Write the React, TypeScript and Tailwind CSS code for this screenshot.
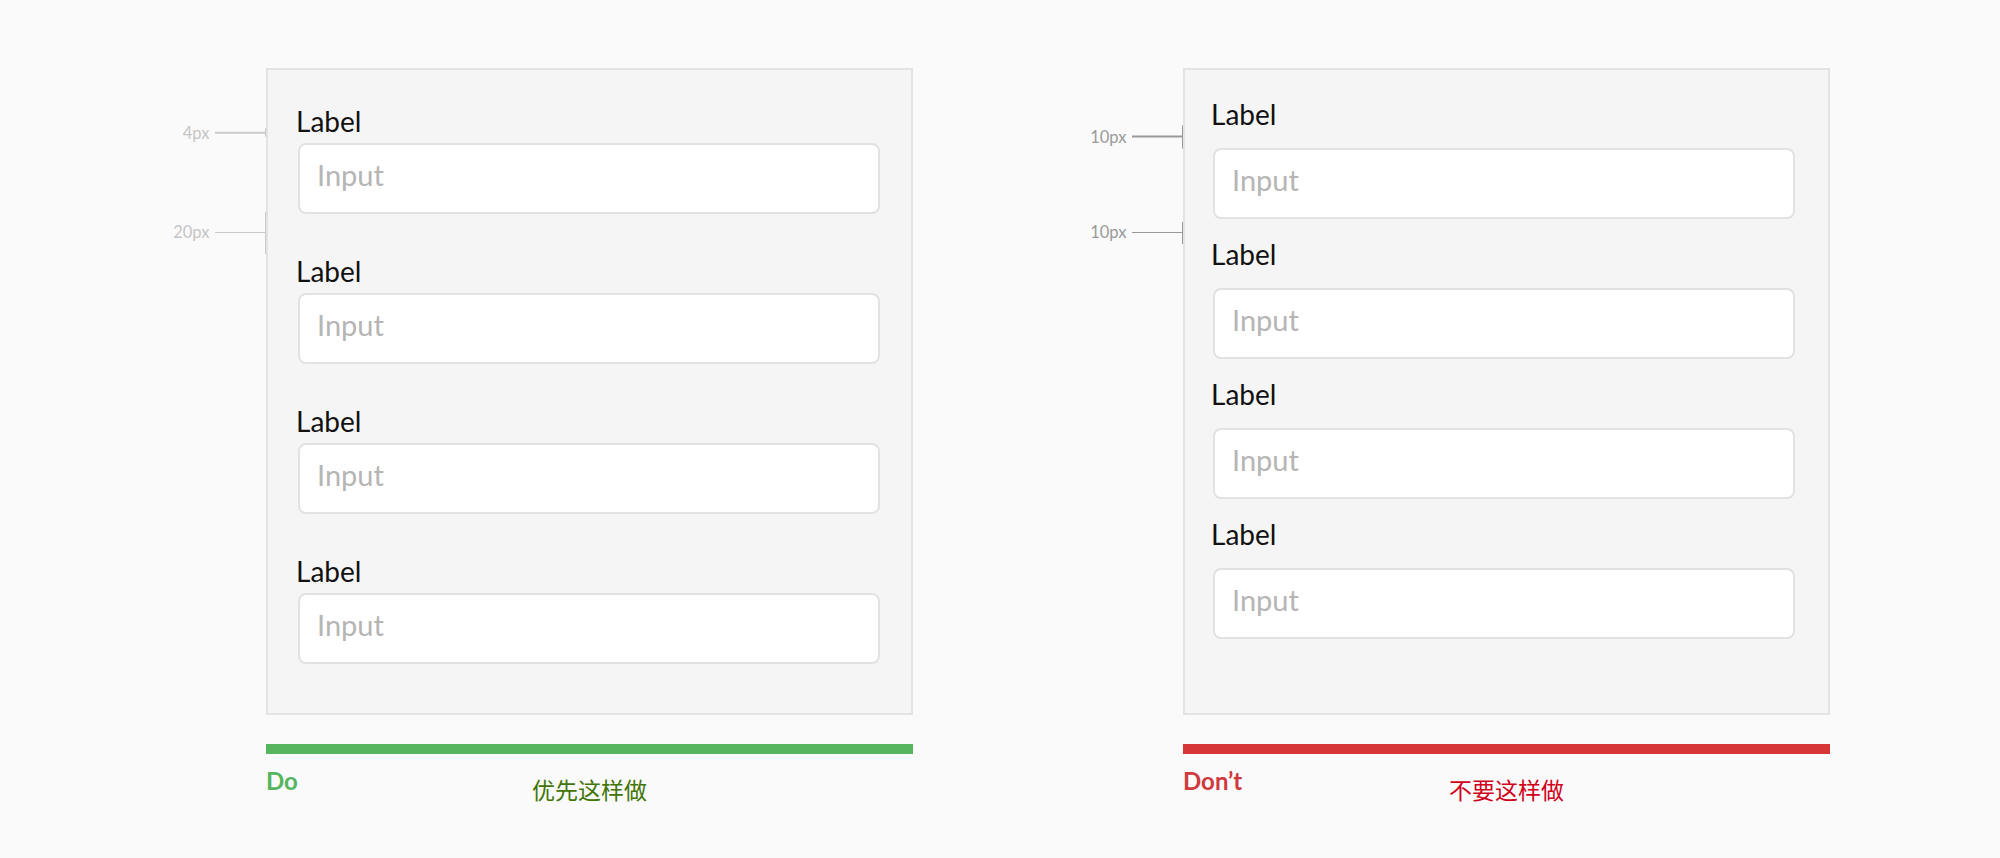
import React from "react";

const font = { fontFamily: "Lato, 'Noto Sans CJK SC', sans-serif" };

type Mark = { text: string; pos: string; tick: string };

const Measure = ({ mark, text, line }: { mark: Mark; text: string; line: string }) => (
  <div className={`absolute right-[calc(100%+2px)] flex -translate-y-1/2 items-center ${mark.pos}`}>
    <span className={`text-[16.5px] leading-none ${text}`}>{mark.text}</span>
    <span className={`ml-[5px] h-[1.5px] w-[50px] ${line}`} />
    <span className={`w-[1.5px] ${mark.tick} ${line}`} />
  </div>
);

const Field = ({ labelGap, inputIndent }: { labelGap: string; inputIndent: string }) => (
  <div className="flex flex-col">
    <span className="text-[28px] leading-[34px] text-[#111]">Label</span>
    <div
      className={`h-[71px] w-[582px] rounded-[8px] border-2 border-[#e2e2e2] bg-white pl-[17px] pt-[12px] text-[29px] leading-[35px] text-[#b5b5b5] ${labelGap} ${inputIndent}`}
    >
      Input
    </div>
  </div>
);

type Example = {
  marks: Mark[];
  markText: string;
  markLine: string;
  pad: string;
  gap: string;
  labelGap: string;
  inputIndent: string;
  bar: string;
  title: string;
  titleColor: string;
  note: string;
  noteColor: string;
};

const Panel = ({ ex }: { ex: Example }) => (
  <div className="flex w-[647px] flex-col">
    <div className={`relative flex h-[647px] flex-col border-2 border-[#e3e3e3] bg-[#f5f5f5] ${ex.pad} ${ex.gap}`}>
      {ex.marks.map((m, i) => (
        <Measure key={i} mark={m} text={ex.markText} line={ex.markLine} />
      ))}
      {[0, 1, 2, 3].map((i) => (
        <Field key={i} labelGap={ex.labelGap} inputIndent={ex.inputIndent} />
      ))}
    </div>
    <div className={`mt-[29px] h-[10px] ${ex.bar}`} />
    <div className="mt-[12px] grid">
      <span className={`col-start-1 row-start-1 justify-self-start text-[24px] font-bold leading-[29px] ${ex.titleColor}`}>
        {ex.title}
      </span>
      <span className={`col-start-1 row-start-1 mt-[10px] justify-self-center text-[23px] leading-[29px] ${ex.noteColor}`}>
        {ex.note}
      </span>
    </div>
  </div>
);

const examples: Example[] = [
  {
    marks: [
      { text: "4px", pos: "top-[62.5px]", tick: "h-[9px]" },
      { text: "20px", pos: "top-[162.5px]", tick: "h-[42px]" },
    ],
    markText: "text-[#c6c6c6]",
    markLine: "bg-[#cacaca]",
    pad: "pl-[28px] pt-[34px]",
    gap: "gap-[40px]",
    labelGap: "mt-[5px]",
    inputIndent: "ml-[2px]",
    bar: "bg-[#56b55e]",
    title: "Do",
    titleColor: "text-[#56b55e]",
    note: "优先这样做",
    noteColor: "text-[#417505]",
  },
  {
    marks: [
      { text: "10px", pos: "top-[66.5px]", tick: "h-[23px]" },
      { text: "10px", pos: "top-[162.5px]", tick: "h-[22px]" },
    ],
    markText: "text-[#9a9a9a]",
    markLine: "bg-[#9a9a9a]",
    pad: "pl-[26px] pt-[27px]",
    gap: "gap-[18px]",
    labelGap: "mt-[17px]",
    inputIndent: "ml-[2px]",
    bar: "bg-[#d63638]",
    title: "Don’t",
    titleColor: "text-[#cf3a3e]",
    note: "不要这样做",
    noteColor: "text-[#d0021b]",
  },
];

export default function App() {
  return (
    <div className="h-[858px] w-full bg-[#fafafa]" style={font}>
      <div className="flex gap-[270px] pl-[266px] pt-[68px]">
        {examples.map((ex) => (
          <Panel key={ex.title} ex={ex} />
        ))}
      </div>
    </div>
  );
}
